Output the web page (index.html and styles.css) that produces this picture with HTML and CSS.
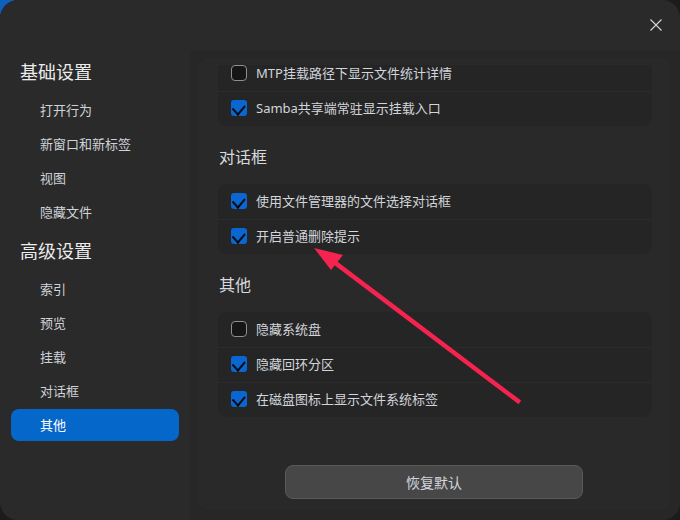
FILE: index.html
```html
<!DOCTYPE html>
<html lang="zh">
<head>
<meta charset="utf-8">
<link rel="stylesheet" href="styles.css">
</head>
<body>
<div class="window">
  <aside class="sidebar">
    <div class="group-title">基础设置</div>
    <ul class="nav">
      <li>打开行为</li>
      <li>新窗口和新标签</li>
      <li>视图</li>
      <li>隐藏文件</li>
    </ul>
    <div class="group-title second">高级设置</div>
    <ul class="nav">
      <li>索引</li>
      <li>预览</li>
      <li>挂载</li>
      <li>对话框</li>
      <li class="active">其他</li>
    </ul>
  </aside>
  <main class="main">
    <header class="titlebar">
      <button class="close" aria-label="关闭">
        <svg width="12" height="12" viewBox="0 0 12 12"><path d="M0.5 0.5 L11.5 11.5 M11.5 0.5 L0.5 11.5" stroke="#d6d6d6" stroke-width="1.1" fill="none"/></svg>
      </button>
    </header>
    <div class="body">
      <section class="panel">
        <div class="scroll">
          <div class="content">
            <div class="card">
              <div class="row"><span class="cb"></span><span>MTP挂载路径下显示文件统计详情</span></div>
              <div class="row"><span class="cb on"></span><span>Samba共享端常驻显示挂载入口</span></div>
            </div>
            <h3 class="section">对话框</h3>
            <div class="card">
              <div class="row"><span class="cb on"></span><span>使用文件管理器的文件选择对话框</span></div>
              <div class="row"><span class="cb on"></span><span>开启普通删除提示</span></div>
            </div>
            <h3 class="section">其他</h3>
            <div class="card">
              <div class="row"><span class="cb"></span><span>隐藏系统盘</span></div>
              <div class="row"><span class="cb on"></span><span>隐藏回环分区</span></div>
              <div class="row"><span class="cb on"></span><span>在磁盘图标上显示文件系统标签</span></div>
            </div>
          </div>
        </div>
        <div class="footer">
          <button class="reset">恢复默认</button>
        </div>
      </section>
    </div>
  </main>
  <svg class="arrow" width="680" height="520" viewBox="0 0 680 520">
    <line x1="518" y1="401" x2="334" y2="262" stroke="#f5234f" stroke-width="4.5" stroke-linecap="square"/>
    <polygon points="314,248 343,255 331,270" fill="#f5234f"/>
  </svg>
</div>
</body>
</html>
```
FILE: styles.css
```css
* { box-sizing: border-box; }
html, body {
  margin: 0;
  padding: 0;
  width: 680px;
  height: 520px;
  overflow: hidden;
  background: #1c1c1c radial-gradient(circle at 0 0, #0f5fc0 0, #0f5fc0 14px, #1c1c1c 15px);
  font-family: "Noto Sans", "Noto Sans CJK SC", sans-serif;
}
.window {
  position: relative;
  width: 680px;
  height: 520px;
  background: #2a2a2a;
  border-radius: 18px;
  display: grid;
  grid-template-columns: 190px 1fr;
  overflow: hidden;
}
.sidebar {
  padding-top: 60px;
}
.group-title {
  padding-left: 20px;
  font-size: 18px;
  line-height: 24px;
  color: #ececec;
  margin-bottom: 10px;
}
.group-title.second { margin-top: 11px; }
.nav {
  list-style: none;
  margin: 0;
  padding: 0;
  display: flex;
  flex-direction: column;
  gap: 2px;
}
.nav li {
  margin: 0 11px;
  height: 32px;
  line-height: 32px;
  padding-left: 29px;
  font-size: 13px;
  color: #cfd2d8;
  border-radius: 8px;
}
.nav li.active {
  background: #0667cb;
  color: #ffffff;
}
.main {
  display: flex;
  flex-direction: column;
  min-height: 0;
}
.titlebar {
  height: 50px;
  display: flex;
  justify-content: flex-end;
  align-items: center;
  padding-right: 18px;
  flex: none;
}
.close {
  width: 12px;
  height: 12px;
  padding: 0;
  border: 0;
  background: none;
  display: flex;
}
.body {
  flex: 1;
  min-height: 0;
  background: #272727;
  padding: 8px 10px 10px 8px;
  display: flex;
}
.panel {
  flex: 1;
  background: #292929;
  border-radius: 10px;
  padding-top: 7px;
  display: flex;
  flex-direction: column;
  min-height: 0;
}
.scroll {
  flex: 1;
  overflow: hidden;
  padding: 0 18px 0 20px;
}
.content {
  margin-top: -8px;
}
.card {
  background: #252525;
  border-radius: 9px;
  padding: 0 0 0 13px;
}
.row {
  height: 35px;
  display: flex;
  align-items: center;
  gap: 9px;
  font-size: 13px;
  line-height: 18px;
  color: #d2d5db;
  border-top: 1px solid #2b2b2b;
  margin-left: -13px;
  padding-left: 13px;
  padding-bottom: 2px;
}
.row:first-child { border-top: 0; }
.card:first-child .row:first-child { height: 34px; }
.cb {
  position: relative;
  width: 16px;
  height: 16px;
  flex: none;
  border-radius: 4px;
  border: 1.5px solid #8e8f93;
  background: #161616;
}
.cb.on {
  border: 0;
  background: #0a66d1;
  border-radius: 3px;
}
.cb.on::after {
  content: "";
  position: absolute;
  left: 3px;
  top: 3px;
  width: 10px;
  height: 7px;
  border-left: 2.5px solid #0a0a0a;
  border-bottom: 2.5px solid #0a0a0a;
  transform: rotate(-50deg) skewX(-8deg);
  transform-origin: 50% 70%;
}
.section {
  margin: 20px 0 16px 1px;
  font-size: 16px;
  line-height: 22px;
  font-weight: 400;
  color: #d8dade;
}
.footer {
  flex: none;
  display: flex;
  justify-content: center;
  padding-bottom: 11px;
}
.reset {
  width: 298px;
  height: 34px;
  border-radius: 8px;
  border: 1px solid #5a5a5a;
  background: #474747;
  color: #d2d6de;
  font-family: "Noto Sans", "Noto Sans CJK SC", sans-serif;
  font-size: 14px;
}
.arrow {
  position: absolute;
  left: 0;
  top: 0;
  pointer-events: none;
}
```
